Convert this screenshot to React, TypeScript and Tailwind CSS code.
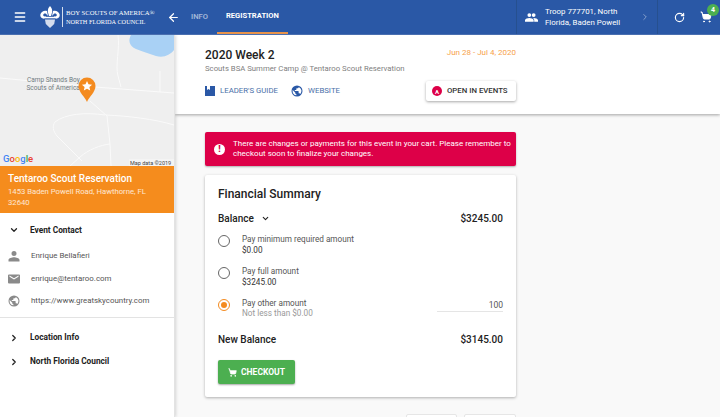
import { ShoppingCart, RotateCw, ChevronRight, ChevronDown, ArrowLeft, Menu } from "lucide-react";

function Logo() {
  return (
    <svg width="20" height="22" viewBox="0 0 20 22" fill="#fff">
      <path d="M10 0c1.800 2 2.600 4 2 6.500L11 10H9L8 6.500C7.400 4 8.200 2 10 0z" />
      <path d="M7 5C4 4 1.500 5.500.5 8c-.8 2.300.7 4.500 3 4.500 1.500 0 2.500-1 2.500-2.200C5 11 3.500 10.500 3.200 9.300 3 7.800 4.800 7 6 7.800L8 10z" />
      <path d="M13 5c3-1 5.500.5 6.500 3 .8 2.300-.7 4.500-3 4.500-1.500 0-2.500-1-2.500-2.200 1 .7 2.500.2 2.800-1 .2-1.500-1.600-2.300-2.800-1.500L12 10z" />
      <path d="M5 13.500h10l-.8 4.500L10 22l-4.200-4z" opacity="0.8" />
      <rect x="3" y="10.800" width="14" height="1.500" />
    </svg>
  );
}

function MapArt() {
  return (
    <svg className="block" width="174" height="131" viewBox="0 0 174 131">
      <rect width="174" height="131" fill="#efefef" />
      <path d="M131 0c-3 5-2 11 5 14 6 2 13 5 20 7 8 2 14-1 18-6V0z" fill="#a9d1f5" />
      <g fill="none" stroke="#fafafa" strokeWidth="1">
        <path d="M0 43l95 9 79 6" />
        <path d="M118 0c2 14-3 30 0 41l3 11" />
        <path d="M160 36v21" />
        <path d="M90 66l17 15 3 28 1 22" />
        <path d="M105 80c-20-3-40-1-50 7-3 4-2 9 2 14l25 25" />
        <path d="M106 80c22 1 48 4 68 10" />
        <path d="M110 109c-10 1-22 6-30 13l-10 9" />
      </g>
      <text x="27" y="47" fontSize="6.500" fill="#6f7a80" fontFamily="Roboto, sans-serif">Camp Shands Boy</text>
      <text x="26.500" y="54.500" fontSize="6.500" fill="#6f7a80" fontFamily="Roboto, sans-serif">Scouts of America</text>
      <path d="M87 67c-2-5-8.500-10-8.500-16a8.500 8.500 0 0 1 17 0c0 6-6.500 11-8.500 16z" fill="#f48b1f" />
      <path d="M87 46l1.500 3.300 3.600.4-2.700 2.400.8 3.500-3.200-1.800-3.200 1.800.8-3.500-2.700-2.400 3.600-.4z" fill="#fff" />
      <text x="3" y="127" fontSize="9.500" fontWeight="500" fontFamily="Roboto, sans-serif">
        <tspan fill="#4285f4">G</tspan>
        <tspan fill="#ea4335">o</tspan>
        <tspan fill="#fbbc05">o</tspan>
        <tspan fill="#4285f4">g</tspan>
        <tspan fill="#34a853">l</tspan>
        <tspan fill="#ea4335">e</tspan>
      </text>
      <rect x="129" y="124" width="45" height="7" fill="#f5f5f5" opacity="0.8" />
      <text x="130" y="130" fontSize="5.500" fill="#444" fontFamily="Roboto, sans-serif">Map data ©2019</text>
    </svg>
  );
}

function PersonIcon() {
  return (
    <svg width="12" height="12" viewBox="0 0 24 24" fill="#8a8a8a">
      <path d="M12 12a5 5 0 1 0 0-10 5 5 0 0 0 0 10zm0 2.500c-3.700 0-11 1.800-11 5.500v3h22v-3c0-3.700-7.300-5.500-11-5.500z" />
    </svg>
  );
}

function MailIcon() {
  return (
    <svg width="12" height="12" viewBox="0 0 24 24" fill="#8a8a8a">
      <path d="M22 3H2a2 2 0 0 0-2 2v14a2 2 0 0 0 2 2h20a2 2 0 0 0 2-2V5a2 2 0 0 0-2-2zm-1 4.500l-9 5.500-9-5.500V5l9 5.500L21 5z" />
    </svg>
  );
}

function GlobeIcon({ size, color }: { size: number; color: string }) {
  return (
    <svg width={size} height={size} viewBox="0 0 24 24" fill={color}>
      <path d="M12 1a11 11 0 1 0 0 22 11 11 0 0 0 0-22zM10.900 20.700A8.800 8.800 0 0 1 3.200 12c0-.7.100-1.300.2-2l5.300 5.300v1.100c0 1.200 1 2.200 2.200 2.200zm7.600-2.800a2.200 2.200 0 0 0-2.100-1.500h-1.100v-3.300c0-.6-.5-1.100-1.100-1.100H7.600V9.800h2.200c.6 0 1.100-.5 1.100-1.100V6.500h2.200c1.200 0 2.200-1 2.200-2.200v-.5a8.800 8.800 0 0 1 3.200 14.100z" />
    </svg>
  );
}

function GroupIcon() {
  return (
    <svg width="13" height="13" viewBox="0 0 24 24" fill="#fff">
      <path d="M16 11a3.500 3.500 0 1 0 0-7 3.500 3.500 0 0 0 0 7zm-8 0a3.500 3.500 0 1 0 0-7 3.500 3.500 0 0 0 0 7zm0 2c-2.700 0-8 1.300-8 4v3h16v-3c0-2.700-5.300-4-8-4zm8 0h-1c1.200.9 2 2.100 2 4v3h7v-3c0-2.700-5.300-4-8-4z" />
    </svg>
  );
}

function Radio({ checked }: { checked?: boolean }) {
  return (
    <span
      className={`flex h-[12px] w-[12px] shrink-0 items-center justify-center rounded-full border ${
        checked ? "border-[#f48b1f]" : "border-[#666]"
      }`}
    >
      {checked && <span className="h-[6px] w-[6px] rounded-full bg-[#f48b1f]" />}
    </span>
  );
}

function ContactRow({ icon, text }: { icon: React.ReactNode; text: string }) {
  return (
    <div className="flex h-[22.500px] items-center">
      <span className="flex w-[31px] justify-start pl-[8px]">{icon}</span>
      <span className="text-[7.900px] text-[#555]">{text}</span>
    </div>
  );
}

export default function App() {
  return (
    <div className="flex h-[417px] w-[720px] flex-col overflow-hidden bg-[#f9f9f9] font-['Roboto',sans-serif]">
      <header className="z-20 flex h-[35px] shrink-0 items-center border-b border-[#4a6fb0] bg-[#2a58a6] text-white">
        <Menu size={14} strokeWidth={2.500} className="ml-[13px]" />
        <span className="ml-[13px] flex items-center">
          <Logo />
        </span>
        <span className="ml-[2px] h-[20px] w-px bg-white/80" />
        <div className="ml-[3px] w-[90px] whitespace-nowrap font-['Liberation_Serif',serif] leading-[8px]">
          <div className="text-[6.700px]">BOY SCOUTS OF AMERICA®</div>
          <div className="mt-px text-[6.300px]">NORTH FLORIDA COUNCIL</div>
        </div>
        <ArrowLeft size={13} strokeWidth={2.200} className="ml-[11px]" />
        <nav className="ml-[1px] flex h-full items-center self-stretch text-[7.600px] font-medium">
          <span className="px-[10px] text-white/60">INFO</span>
          <span className="ml-[-1px] flex h-full items-center border-b-2 border-[#e8934a] px-[9px] font-bold">REGISTRATION</span>
        </nav>
        <div className="ml-auto flex h-full w-[141px] items-center border-l border-[#26508f] pl-[8px]">
          <GroupIcon />
          <div className="ml-[7px] mt-[1px] w-[85px] whitespace-nowrap text-[7.900px] leading-[10.500px]">
            Troop 777701, North
            <br />
            Florida, Baden Powell
          </div>
          <ChevronRight size={10} className="ml-[10px] text-white/50" />
        </div>
        <div className="flex h-full w-[63px] items-center border-l border-[#26508f]">
          <RotateCw size={11} strokeWidth={2.500} className="ml-[16px]" />
          <div className="relative ml-[15px]">
            <ShoppingCart size={12} fill="#fff" />
            <span className="absolute -right-[7px] -top-[7px] flex h-[12px] w-[12px] items-center justify-center rounded-full bg-[#4caf50] text-[7px] font-bold">
              4
            </span>
          </div>
        </div>
      </header>

      <div className="flex min-h-0 flex-1">
        <aside className="z-10 w-[175px] shrink-0 border-r border-[#e3e3e3] bg-white shadow-[1px_0_3px_rgba(0,0,0,0.15)]">
          <MapArt />
          <div className="h-[47px] bg-[#f58c1d] px-[8px] pt-[6px] text-white">
            <div className="text-[10px] font-medium leading-[13px]">Tentaroo Scout Reservation</div>
            <div className="mt-[2px] text-[7.700px] leading-[10.500px] text-white/80">
              1453 Baden Powell Road, Hawthorne, FL
              <br />
              32640
            </div>
          </div>
          <div className="border-b border-[#e3e3e3] pb-[4px]">
            <div className="flex h-[32px] items-center pt-[2px] text-[#222]">
              <ChevronDown size={10} strokeWidth={3} className="ml-[9px]" />
              <span className="ml-[11px] text-[8.300px] font-bold">Event Contact</span>
            </div>
            <ContactRow icon={<PersonIcon />} text="Enrique Bellafieri" />
            <ContactRow icon={<MailIcon />} text="enrique@tentaroo.com" />
            <ContactRow icon={<GlobeIcon size={12} color="#8a8a8a" />} text="https://www.greatskycountry.com" />
          </div>
          <div className="mt-[8px] flex h-[24px] items-center text-[#222]">
            <ChevronRight size={10} strokeWidth={3} className="ml-[9px]" />
            <span className="ml-[11px] text-[8.300px] font-bold">Location Info</span>
          </div>
          <div className="flex h-[24px] items-center text-[#222]">
            <ChevronRight size={10} strokeWidth={3} className="ml-[9px]" />
            <span className="ml-[11px] text-[8.300px] font-bold">North Florida Council</span>
          </div>
        </aside>

        <main className="min-w-0 flex-1">
          <section className="h-[79px] bg-white pl-[30px] pt-[13px] shadow-[0_1px_3px_rgba(0,0,0,0.35)]">
            <div className="flex w-[311px] items-start justify-between">
              <h1 className="text-[12px] font-medium leading-[14px] text-[#222]">2020 Week 2</h1>
              <span className="text-[8px] leading-[9px] text-[#f7a14a]">Jun 28 - Jul 4, 2020</span>
            </div>
            <p className="mt-[2px] text-[7.750px] leading-[10px] text-[#808080]">
              Scouts BSA Summer Camp @ Tentaroo Scout Reservation
            </p>
            <div className="mt-[7px] flex w-[311px] items-center">
              <svg width="10" height="10" viewBox="0 0 10 10" fill="#2a58a6">
                <path d="M0 0h10v10H0z" />
                <path d="M2 0h3v4L3.500 3 2 4z" fill="#fff" />
              </svg>
              <span className="ml-[5px] text-[7.800px] text-[#4a6fa8]">LEADER'S GUIDE</span>
              <span className="ml-[13px] flex">
                <GlobeIcon size={12} color="#2a58a6" />
              </span>
              <span className="ml-[5px] text-[7.800px] text-[#4a6fa8]">WEBSITE</span>
              <div className="ml-auto flex h-[20px] w-[90px] items-center rounded-[2px] bg-white pl-[6px] shadow-[0_1px_3px_rgba(0,0,0,0.35)]">
                <span className="flex h-[10px] w-[10px] items-center justify-center rounded-full bg-[#dd0048] text-[6px] font-bold text-white">
                  A
                </span>
                <span className="ml-[5px] text-[7.800px] font-medium text-[#333]">OPEN IN EVENTS</span>
              </div>
            </div>
          </section>

          <div className="ml-[30px] w-[311px] pt-[18px]">
            <div className="flex h-[34px] items-center rounded-[2px] bg-[#dd0048] pl-[9px] text-white shadow-[0_1px_2px_rgba(0,0,0,0.3)]">
              <span className="flex h-[11px] w-[11px] shrink-0 items-center justify-center rounded-full bg-white text-[9px] font-black leading-none text-[#dd0048]">
                !
              </span>
              <p className="ml-[8px] text-[8px] leading-[10.500px]">
                There are changes or payments for this event in your cart. Please remember to checkout soon to finalize
                your changes.
              </p>
            </div>

            <div className="mt-[9px] h-[222px] rounded-[2px] bg-white px-[13px] pt-[12px] shadow-[0_1px_3px_rgba(0,0,0,0.3)]">
              <h2 className="text-[12px] font-medium leading-[15px] text-[#222]">Financial Summary</h2>
              <div className="mt-[9px] flex h-[14px] items-center justify-between text-[10px] font-medium text-[#222]">
                <span className="flex items-center">
                  Balance
                  <ChevronDown size={9} strokeWidth={3} className="ml-[7px]" />
                </span>
                <span>$3245.00</span>
              </div>

              <div className="mt-[9px] flex h-[32px] items-start">
                <span className="mt-[1px]"><Radio /></span>
                <div className="ml-[12px] text-[8.200px] leading-[10.500px]">
                  <div className="text-[#555]">Pay minimum required amount</div>
                  <div className="text-[#333]">$0.00</div>
                </div>
              </div>
              <div className="flex h-[31.500px] items-start">
                <span className="mt-[1px]"><Radio /></span>
                <div className="ml-[12px] text-[8.200px] leading-[10.500px]">
                  <div className="text-[#555]">Pay full amount</div>
                  <div className="text-[#333]">$3245.00</div>
                </div>
              </div>
              <div className="flex h-[32px] items-start">
                <span className="mt-[1px]"><Radio checked /></span>
                <div className="ml-[12px] text-[8.200px] leading-[10.500px]">
                  <div className="text-[#555]">Pay other amount</div>
                  <div className="text-[#999]">Not less than $0.00</div>
                </div>
                <div className="ml-auto h-[14px] w-[66px] border-b border-[#e5e5e5] pt-[2px] text-right text-[8.500px] leading-[10px] text-[#555]">
                  100
                </div>
              </div>

              <div className="mt-[2.500px] flex h-[14px] items-center justify-between text-[10px] font-medium text-[#222]">
                <span>New Balance</span>
                <span>$3145.00</span>
              </div>

              <div className="mt-[14px] flex h-[24px] w-[77px] items-center justify-center rounded-[2px] bg-[#4caf50] text-white shadow-[0_1px_2px_rgba(0,0,0,0.35)]">
                <ShoppingCart size={9} fill="#fff" />
                <span className="ml-[4px] text-[8.500px] font-bold">CHECKOUT</span>
              </div>
            </div>

            <div className="mt-[17px] flex justify-end gap-[7px]">
              <div className="h-[12px] w-[51px] rounded-[2px] border border-[#e6e6e6] bg-white" />
              <div className="h-[12px] w-[52px] rounded-[2px] border border-[#e6e6e6] bg-white" />
            </div>
          </div>
        </main>
      </div>
    </div>
  );
}
